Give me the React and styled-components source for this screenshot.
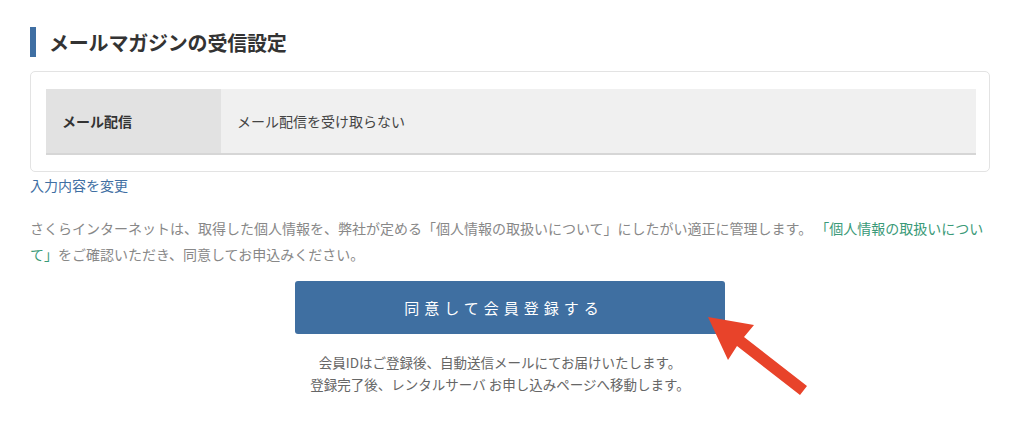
import React from "react";
import styled, { createGlobalStyle } from "styled-components";

const GlobalStyle = createGlobalStyle`
  html, body { margin: 0; padding: 0; background: #fff; }
  body {
    font-family: "Noto Sans CJK JP", "Noto Sans", sans-serif;
    color: #333;
  }
`;

const Page = styled.div`
  position: relative;
  width: 960px;
  padding: 27px 34px 40px 30px;
`;

const Heading = styled.h2`
  margin: 0;
  height: 30px;
  display: flex;
  align-items: center;
  border-left: 6px solid #3f6fa3;
  padding-left: 13px;
  font-size: 20px;
  font-weight: 700;
  color: #333;
  letter-spacing: -0.2px;
`;

const Box = styled.div`
  margin-top: 14px;
  border: 1px solid #e3e3e3;
  border-radius: 5px;
  padding: 17px 13px 16px 15px;
`;

const Table = styled.div`
  display: grid;
  grid-template-columns: 175px 1fr;
  height: 64px;
  border-bottom: 2px solid #d6d6d6;
`;

const Cell = styled.div`
  display: flex;
  align-items: center;
  padding-left: 16px;
  font-size: 14px;
  background: ${(p) => (p.$head ? "#e2e2e2" : "#f0f0f0")};
  font-weight: ${(p) => (p.$head ? 700 : 400)};
  color: ${(p) => (p.$head ? "#333" : "#444")};
`;

const EditLink = styled.a`
  display: inline-block;
  margin-top: 3px;
  font-size: 14px;
  line-height: 20px;
  color: #3f6fa3;
  text-decoration: none;
`;

const Notice = styled.p`
  margin: 19px 0 0;
  font-size: 14px;
  line-height: 26px;
  color: #888;
`;

const GreenLink = styled.a`
  color: #3a9a78;
  text-decoration: none;
`;

const ButtonRow = styled.div`
  display: flex;
  justify-content: center;
  margin-top: 14px;
`;

const SubmitButton = styled.button`
  width: 430px;
  height: 53px;
  border: none;
  border-radius: 3px;
  background: #3f6fa1;
  color: #fff;
  font-family: inherit;
  font-size: 15px;
  letter-spacing: 5px;
  padding: 0 12px 0 0;
  cursor: pointer;
`;

const Notes = styled.p`
  margin: 17px 0 0;
  text-align: center;
  font-size: 13.5px;
  line-height: 22px;
  color: #666;
  padding-right: 20px;
`;

const Arrow = styled.svg`
  position: absolute;
  left: 700px;
  top: 310px;
`;

export default function App() {
  return (
    <>
      <GlobalStyle />
      <Page>
        <Heading>メールマガジンの受信設定</Heading>
        <Box>
          <Table>
            <Cell $head>メール配信</Cell>
            <Cell>メール配信を受け取らない</Cell>
          </Table>
        </Box>
        <EditLink href="#">入力内容を変更</EditLink>
        <Notice>
          さくらインターネットは、取得した個人情報を、弊社が定める「個人情報の取扱いについて」にしたがい適正に管理します。{" "}
          <GreenLink href="#">「個人情報の取扱いについて」</GreenLink>
          をご確認いただき、同意してお申込みください。
        </Notice>
        <ButtonRow>
          <SubmitButton>同意して会員登録する</SubmitButton>
        </ButtonRow>
        <Notes>
          会員IDはご登録後、自動送信メールにてお届けいたします。
          <br />
          登録完了後、レンタルサーバ お申し込みページへ移動します。
        </Notes>
        <Arrow width="120" height="90" viewBox="0 0 120 90">
          <polygon points="8,7 54,15 44,27 107,76 100,85 37,36 28,50" fill="#e8432a" />
        </Arrow>
      </Page>
    </>
  );
}
